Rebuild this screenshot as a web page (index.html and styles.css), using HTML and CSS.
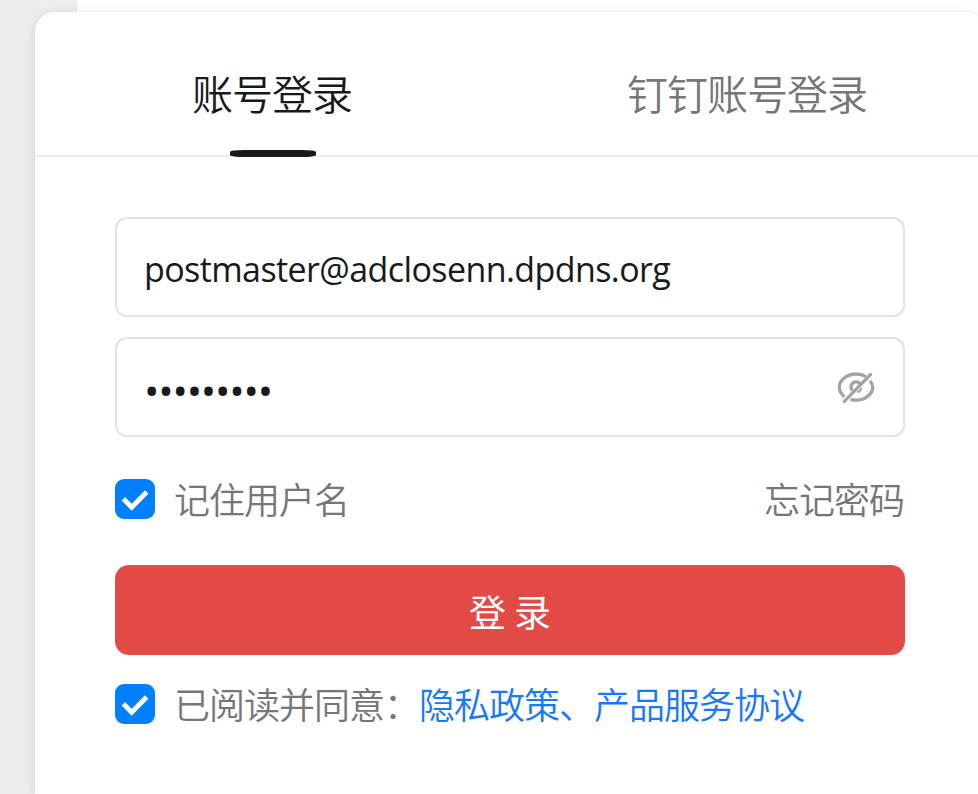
FILE: index.html
```html
<!DOCTYPE html>
<html lang="zh-CN">
<head>
<meta charset="utf-8">
<title>账号登录</title>
<link rel="stylesheet" href="styles.css">
</head>
<body>
<main class="card">
  <nav class="tabs">
    <div class="tab tab-active"><span>账号登录</span></div>
    <div class="tab"><span>钉钉账号登录</span></div>
  </nav>
  <form class="form">
    <div class="field"><input class="input" type="text" value="postmaster@adclosenn.dpdns.org"></div>
    <div class="field">
      <input class="input input-password" type="password" value="123456789">
      <svg class="eye" viewBox="0 0 40 34" fill="none" stroke="#a2a4a5" stroke-width="3.300">
        <path d="M30 4.600C27 2.900 23.600 2 20 2C10.800 2 3.300 8.500 3.300 15.100C3.300 18.700 5.200 22.200 8.400 24.700"/>
        <path d="M34 8.800C35.800 10.800 36.700 13 36.700 15.200C36.700 22 29.200 28.200 20 28.200C18 28.200 16.200 27.900 14.500 27.400"/>
        <path d="M16.200 18.400C13.400 14.600 15.700 9.900 20 9.900C21.700 9.900 23.200 10.600 24.200 11.800"/>
        <path d="M25.400 15.600C25.100 18 23.500 19.800 21.200 20.300" stroke-width="2"/>
        <path d="M8.300 29.400L34.600 2.500" stroke-linecap="round"/>
      </svg>
    </div>
    <div class="row">
      <span class="check"><svg viewBox="0 0 40 40"><path d="M8.300 19.800L16.700 28.300L31.700 13" fill="none" stroke="#fff" stroke-width="4.800"/></svg></span>
      <span class="label">记住用户名</span>
      <span class="label forgot">忘记密码</span>
    </div>
    <button class="submit" type="button"><span>登</span><span>录</span></button>
    <div class="row row-agree">
      <span class="check"><svg viewBox="0 0 40 40"><path d="M8.300 19.800L16.700 28.300L31.700 13" fill="none" stroke="#fff" stroke-width="4.800"/></svg></span>
      <span class="label">已阅读并同意：<span class="link">隐私政策、产品服务协议</span></span>
    </div>
  </form>
</main>
</body>
</html>
```
FILE: styles.css
```css
* { box-sizing: border-box; }
html, body { height: 100%; overflow: hidden; }
body {
  margin: 0;
  padding: 12px 0 0 35px;
  background: linear-gradient(to right, #eee 77px, #fff 77px);
  font-family: "Noto Sans CJK SC", sans-serif;
  font-weight: 350;
}
.card {
  width: 950px;
  height: 782px;
  background: #fff;
  border-radius: 20px 20px 0 0;
  box-shadow: 0 2px 14px rgba(0, 0, 0, 0.12);
}
.tabs {
  display: flex;
  height: 145px;
  border-bottom: 2px solid #ececec;
}
.tab {
  position: relative;
  flex: 1;
  height: 145px;
  line-height: 60px;
  padding: 50px 1px 0 0;
  text-align: center;
  white-space: nowrap;
  font-size: 41px;
  letter-spacing: -1px;
  color: #747677;
}
.tab-active { color: #171a1d; }
.tab-active::after {
  content: "";
  position: absolute;
  left: 50%;
  bottom: 0;
  width: 86px;
  height: 7px;
  margin-left: -43px;
  background: #171a1d;
  border-radius: 14px / 2px;
}
.form { padding: 60px 80px 0; }
.field {
  display: flex;
  align-items: center;
  width: 790px;
  height: 100px;
  margin-bottom: 20px;
  padding: 0 27px;
  border: 2px solid #e1e2e3;
  border-radius: 12px;
}
.input {
  flex: 1;
  min-width: 0;
  height: 60px;
  margin: 4px 0 0;
  padding: 0;
  border: 0;
  outline: 0;
  background: none;
  color: #171a1d;
  font-family: "Open Sans", "Noto Sans", sans-serif;
  font-size: 34px;
  font-weight: 400;
  letter-spacing: -0.590px;
}
.input-password { margin-top: 5px; font-size: 41px; letter-spacing: -1.200px; }
.eye { width: 40px; height: 34px; margin-top: 4px; }
.row {
  display: flex;
  align-items: center;
  height: 40px;
  margin-top: 42px;
}
.row-agree { margin-top: 29px; }
.check {
  width: 40px;
  height: 40px;
  margin-right: 19px;
  border-radius: 9px;
  background: #0080ff;
}
.check svg { display: block; width: 40px; height: 40px; }
.label {
  margin-top: -2px;
  line-height: 40px;
  font-size: 36px;
  letter-spacing: -1px;
  color: #747677;
  white-space: nowrap;
}
.forgot { margin-left: auto; margin-right: 1px; }
.link { color: #1677ff; }
.submit {
  display: flex;
  justify-content: center;
  align-items: center;
  gap: 8px;
  width: 790px;
  height: 90px;
  margin-top: 46px;
  padding: 1px 0 0;
  border: 0;
  border-radius: 14px;
  background: #e34945;
  color: #fff;
  font-family: inherit;
  font-size: 37px;
  font-weight: 400;
}
```
